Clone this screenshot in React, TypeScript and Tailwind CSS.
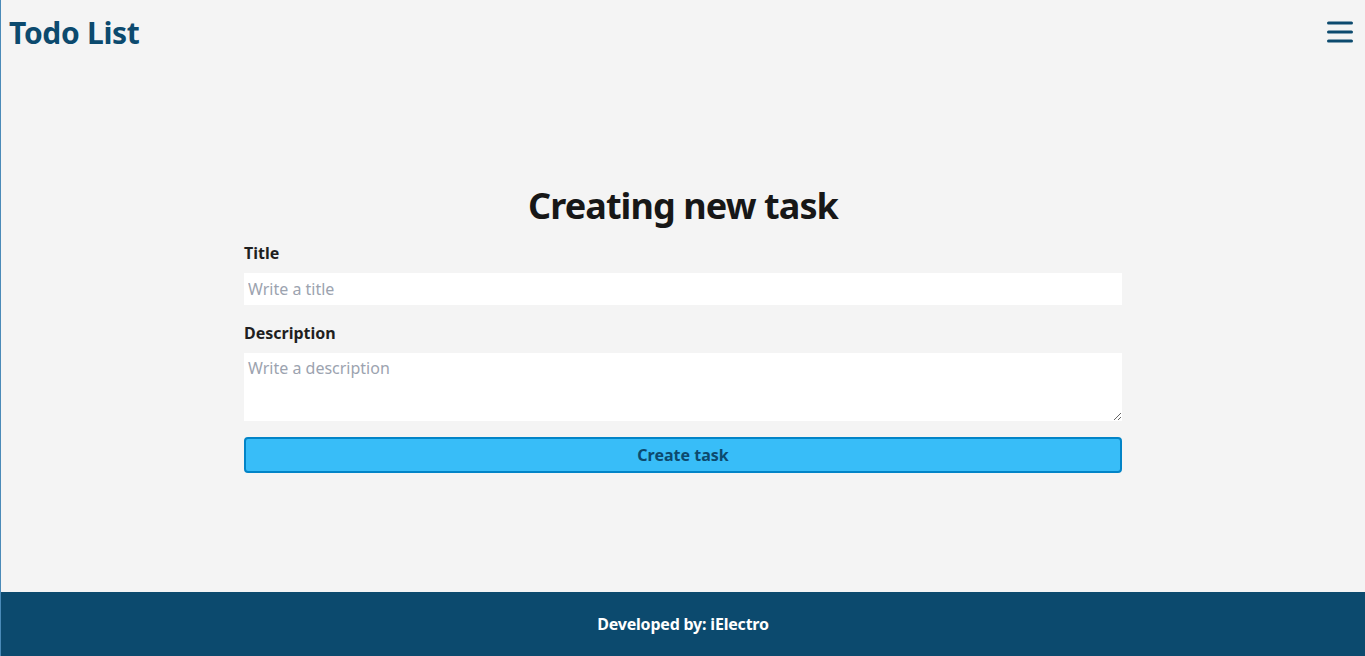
const font = { fontFamily: '"Noto Sans", "Open Sans", sans-serif' };

const MenuIcon = () => (
  <svg width="26" height="22" viewBox="0 0 26 22" fill="none" aria-hidden="true">
    <path d="M1.5 2h23M1.5 11h23M1.5 20h23" stroke="#0c4a6e" strokeWidth="3" strokeLinecap="round" />
  </svg>
);

export default function App() {
  return (
    <div className="flex min-h-screen flex-col border-l border-[#4a8ab8] bg-[#f4f4f4]" style={font}>
      {/* Header */}
      <header className="flex h-16 items-center justify-between pl-2 pr-3">
        <h1 className="text-[30px] font-bold tracking-[-0.3px] text-[#0c4a6e]">Todo List</h1>
        <button aria-label="Open menu" className="flex items-center">
          <MenuIcon />
        </button>
      </header>

      {/* New task form */}
      <main className="flex flex-1 items-center justify-center pt-[2px]">
        <form className="flex w-[878px] flex-col" onSubmit={(e) => e.preventDefault()}>
          <h2 className="text-center text-[36px] leading-10 font-bold tracking-[-0.9px] text-[#171717]">
            Creating new task
          </h2>
          <label className="mt-[15px] text-base leading-6 font-bold text-[#1f1f1f]">Title</label>
          <input
            type="text"
            placeholder="Write a title"
            className="mt-2 h-8 bg-white px-1 text-base text-[#333] outline-none placeholder:text-[#9ca3af]"
          />
          <label className="mt-4 text-base leading-6 font-bold text-[#1f1f1f]">Description</label>
          <textarea
            placeholder="Write a description"
            className="mt-2 h-[68px] bg-white px-1 py-[3px] text-base text-[#333] outline-none placeholder:text-[#9ca3af]"
          />
          <button
            type="submit"
            className="mt-4 h-9 rounded-[4px] border-2 border-[#0284c7] bg-[#38bdf8] text-base font-bold text-[#0c4a6e]"
          >
            Create task
          </button>
        </form>
      </main>

      {/* Footer */}
      <footer className="flex h-16 items-center justify-center bg-[#0c4a6e]">
        <p className="text-base font-bold tracking-[-0.2px] text-white">Developed by: iElectro</p>
      </footer>
    </div>
  );
}
